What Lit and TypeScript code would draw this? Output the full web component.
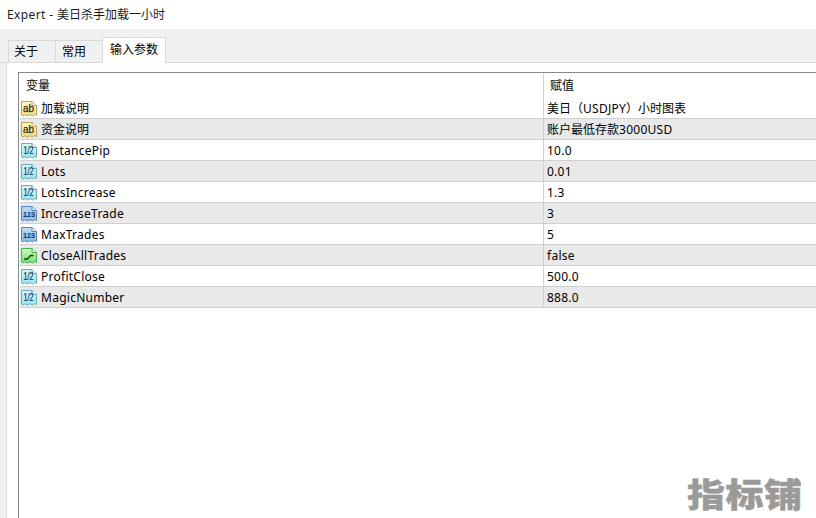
import { LitElement, html, css, svg } from "lit";
import { customElement } from "lit/decorators.js";

type Kind = "ab" | "half" | "num" | "bool";
const rows: [Kind, string, string][] = [
  ["ab", "加载说明", "美日（USDJPY）小时图表"],
  ["ab", "资金说明", "账户最低存款3000USD"],
  ["half", "DistancePip", "10.0"],
  ["half", "Lots", "0.01"],
  ["half", "LotsIncrease", "1.3"],
  ["num", "IncreaseTrade", "3"],
  ["num", "MaxTrades", "5"],
  ["bool", "CloseAllTrades", "false"],
  ["half", "ProfitClose", "500.0"],
  ["half", "MagicNumber", "888.0"],
];
const palette: Record<Kind, [string, string, string]> = {
  ab: ["#fdf6c8", "#f0de8c", "#b8a456"],
  half: ["#d8f6f8", "#9ce4ea", "#62b0c0"],
  num: ["#c0dcf4", "#88bae8", "#5488c0"],
  bool: ["#d0f8c0", "#74e06c", "#50ae54"],
};

function icon(k: Kind) {
  const [a, b, s] = palette[k];
  const body = "M0.5 0.5H11L15.5 4.5V14.5L13.5 13.5L11.5 15L9 13.6L6.5 15L4 13.6L2 15L0.5 14Z";
  let inner;
  if (k === "bool") {
    inner = svg`<path d="M3 11H6.5L9.5 7.5H12.5" fill="none" stroke="#0c4a10" stroke-width="1.3"/>`;
  } else if (k === "ab") {
    inner = svg`<text x="2" y="10.8" textLength="11" lengthAdjust="spacingAndGlyphs" font-family="Liberation Sans, sans-serif" font-size="10.5" stroke="#2e2806" stroke-width="0.25" fill="#2e2806">ab</text>`;
  } else if (k === "num") {
    inner = svg`<text x="2" y="11.2" textLength="12" lengthAdjust="spacingAndGlyphs" font-family="Liberation Sans, sans-serif" font-weight="700" font-size="8" fill="#0c2c5c">123</text>`;
  } else {
    inner = svg`<text x="2.5" y="10.8" textLength="10" lengthAdjust="spacingAndGlyphs" font-family="Liberation Sans, sans-serif" font-size="10" stroke="#0c3c5c" stroke-width="0.2" fill="#0c3c5c">1/2</text>`;
  }
  return html`<svg class="icon" width="16" height="16" viewBox="0 0 16 16">
    <defs>
      <linearGradient id="g-${k}" x1="0" y1="0" x2="0" y2="1">
        <stop offset="0" stop-color="${a}"></stop>
        <stop offset="1" stop-color="${b}"></stop>
      </linearGradient>
    </defs>
    <path d="${body}" fill="url(#g-${k})" stroke="${s}" stroke-width="1"></path>
    <path d="M11 0.5V4.5H15.5" fill="#ffffff" fill-opacity="0.7" stroke="${s}" stroke-width="1"></path>
    ${inner}
  </svg>`;
}

/* Latin runs of the reference's UI font are a little wider than Noto Sans. */
function mixed(text: string) {
  return text
    .split(/([\x20-\x7e]+)/)
    .filter((p) => p)
    .map((p) => (/^[\x20-\x7e]/.test(p) ? html`<span class="latin">${p}</span>` : p));
}

@customElement("app-root")
export class AppRoot extends LitElement {
  static styles = css`
    :host {
      display: flex;
      flex-direction: column;
      width: 816px;
      height: 518px;
      overflow: hidden;
      position: relative;
      background: #fff;
      font-family: "Noto Sans", "Noto Sans CJK SC", sans-serif;
      font-size: 12px;
      line-height: 16px;
      color: #000;
    }
    .latin { letter-spacing: 0.26px; white-space: pre; }
    .title .latin { letter-spacing: 0.38px; }
    .title {
      height: 29px;
      padding: 1px 0 0 7px;
      display: flex;
      align-items: center;
      flex: none;
      color: #1a1a1a;
      box-sizing: border-box;
    }
    .tabbar {
      height: 34px;
      flex: none;
      background: #f0f0f0;
      display: flex;
      align-items: flex-end;
      padding-left: 8px;
      box-sizing: border-box;
      border-bottom: 1px solid #d9d9d9;
    }
    .tab {
      height: 22px;
      box-sizing: border-box;
      border: 1px solid #d9d9d9;
      border-bottom: none;
      display: flex;
      align-items: center;
      margin-right: -1px;
      padding: 0 0 0 5px;
    }
    .tab.a { width: 48px; }
    .tab.b { width: 48px; padding-left: 6px; }
    .tab.c {
      width: 64px;
      height: 26px;
      background: #fff;
      margin-bottom: -1px;
      position: relative;
      padding: 0 0 1px 7px;
    }
    .panel {
      flex: 1;
      min-height: 0;
      background: #f0f0f0;
      padding-left: 6px;
      display: flex;
    }
    .inner {
      flex: 1;
      background: #fff;
      border-left: 1px solid #d9d9d9;
      padding: 9px 0 0 11px;
      display: flex;
    }
    .table {
      flex: 1;
      border: 1px solid #828790;
      border-right: none;
      border-bottom: none;
      background: #fff;
      padding-left: 1px;
    }
    .row {
      display: grid;
      grid-template-columns: 524px 1fr;
      height: 21px;
      box-sizing: border-box;
      border-bottom: 1px solid #d0d0d0;
    }
    .row.alt { background: #e9e9e9; }
    .head {
      height: 25px;
      border-bottom: none;
    }
    .head .cell { padding-top: 0; }
    .head .name { padding-left: 6px; }
    .head .val { padding-left: 6px; }
    .cell {
      display: flex;
      align-items: center;
      border-right: 1px solid #d0d0d0;
      min-width: 0;
      padding-top: 2px;
      box-sizing: border-box;
    }
    .name { padding-left: 1px; gap: 4px; }
    .val { border-right: none; padding-left: 3px; }
    .icon { flex: none; }
    .mark {
      position: absolute;
      left: 687px;
      top: 473px;
      font-family: "Noto Sans CJK SC", sans-serif;
      font-weight: 900;
      font-size: 38px;
      letter-spacing: 0.5px;
      line-height: 40px;
      color: #9c9a99;
      white-space: nowrap;
      transform: scaleY(0.86);
      -webkit-text-stroke: 0.5px #9c9a99;
    }
  `;

  render() {
    return html`
      <div class="title"><span>${mixed("Expert - 美日杀手加载一小时")}</span></div>
      <div class="tabbar">
        <div class="tab a">关于</div>
        <div class="tab b">常用</div>
        <div class="tab c">输入参数</div>
      </div>
      <div class="panel">
        <div class="inner">
          <div class="table">
            <div class="row head">
              <div class="cell name">变量</div>
              <div class="cell val">赋值</div>
            </div>
            ${rows.map(
              ([k, n, v], i) => html`<div class="row ${i % 2 ? "alt" : ""}">
                <div class="cell name">${icon(k)}<span>${mixed(n)}</span></div>
                <div class="cell val"><span>${mixed(v)}</span></div>
              </div>`
            )}
          </div>
        </div>
      </div>
      <div class="mark">指标铺</div>
    `;
  }
}
